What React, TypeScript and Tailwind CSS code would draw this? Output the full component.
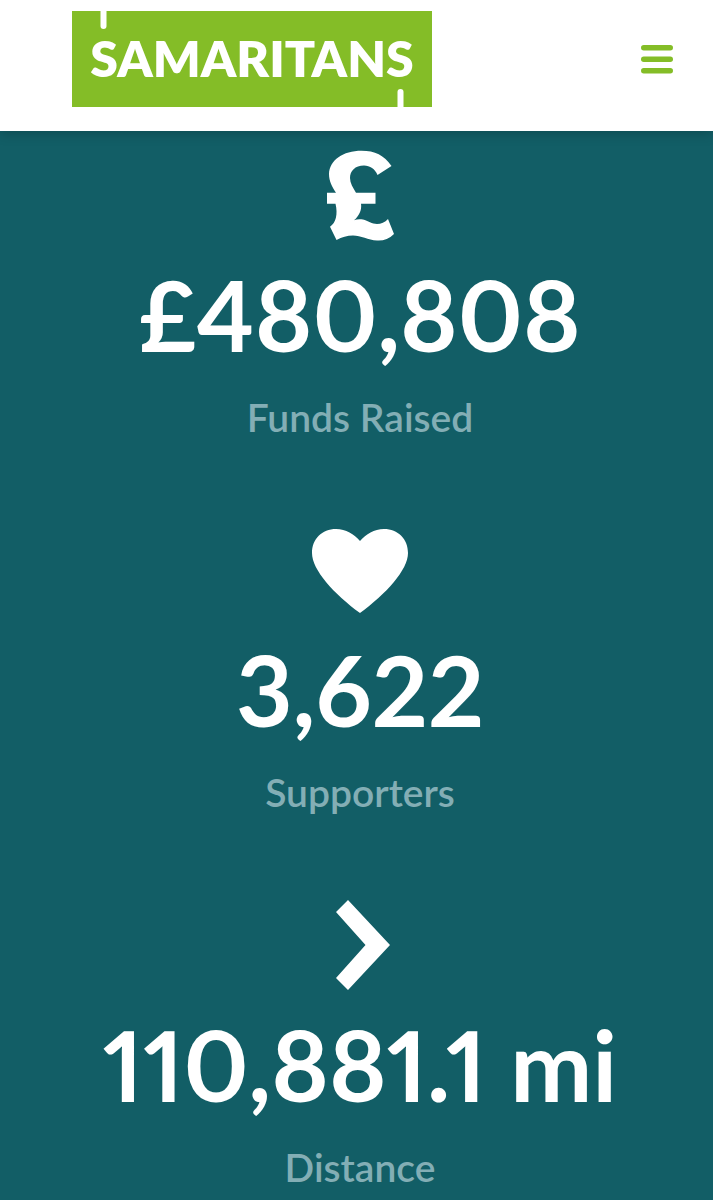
import type { ReactNode } from "react";

function Logo() {
  return (
    <svg viewBox="0 0 360 96" className="block h-24 w-[360px]" role="img" aria-label="Samaritans">
      <rect width="360" height="96" fill="#84bd27" />
      <path d="M31.5 -4V15" stroke="#fff" strokeWidth="6" strokeLinecap="round" />
      <path d="M328.5 81V100" stroke="#fff" strokeWidth="6" strokeLinecap="round" />
      <text x="180" y="66" textAnchor="middle" fill="#fff" fontFamily="Lato, sans-serif" fontWeight="800" fontSize="50">
        SAMARITANS
      </text>
    </svg>
  );
}

function MenuIcon() {
  return (
    <svg viewBox="0 0 32 29" className="block h-[29px] w-8" fill="#84bd27" aria-hidden="true">
      <rect width="32" height="5.5" rx="2.75" />
      <rect y="11.5" width="32" height="5.5" rx="2.75" />
      <rect y="23" width="32" height="5.5" rx="2.75" />
    </svg>
  );
}

function PoundIcon() {
  return (
    <svg viewBox="0 0 96 96" className="size-24" fill="currentColor" aria-hidden="true">
      <path d="M79.500 18 65.500 27C63 21 58 17.500 52 17.500C43 17.500 38 23 38 30C38 35 41 40 44 44.700H63.500V55.700H49C50 62 47 68 42 72.300C45 71 48 71 51 71.500C56 73 60 76 65 76C69 76 73 74.500 76 71L82 86C77 91 71 93 65 92.500C56 92 49 87.500 41 87.500C35 87.500 30 89 24.500 92L18 78.700C24 75 26 66 23.500 55.700H15V44.700H24C20 39 17 33 17 26C17.500 12 31 2.700 49.500 2.700C63 2.700 72 7 79.500 18Z" />
    </svg>
  );
}

function HeartIcon() {
  return (
    <svg viewBox="0 0 96 96" className="size-24" fill="currentColor" aria-hidden="true">
      <path d="M48 18C42 11 34 6 24 6C10 6 0 16 0 30C0 47 22 71 48 90C74 71 96 47 96 30C96 16 86 6 72 6C62 6 54 11 48 18Z" />
    </svg>
  );
}

function ChevronIcon() {
  return (
    <svg viewBox="0 0 96 96" className="size-24" fill="currentColor" aria-hidden="true">
      <path d="M36 2 78 47 36 92 24 80 53.500 47 24 14Z" />
    </svg>
  );
}

function Stat({ icon, value, label }: { icon: ReactNode; value: string; label: string }) {
  return (
    <div className="flex flex-col items-center text-center">
      {icon}
      <p className="mt-2.5 text-[98px] leading-[120px] font-bold whitespace-nowrap proportional-nums">{value}</p>
      <p className="mt-[19px] text-[39px] leading-[48px] font-semibold text-[#83aeb5]">{label}</p>
    </div>
  );
}

export default function App() {
  return (
    <div className="flex min-h-screen flex-col overflow-x-hidden bg-[#125e66] font-['Lato',sans-serif] text-white">
      <header className="z-10 flex items-start justify-between bg-white pt-[11px] pr-10 pb-6 pl-[72px] shadow-[0_2px_12px_rgba(0,0,0,0.22)]">
        <a href="#">
          <Logo />
        </a>
        <button type="button" aria-label="Menu" className="mt-[34px] cursor-pointer">
          <MenuIcon />
        </button>
      </header>
      <main className="flex flex-col gap-[82px] pt-[17px] pl-[7px]">
        <Stat icon={<PoundIcon />} value="£480,808" label="Funds Raised" />
        <Stat icon={<HeartIcon />} value="3,622" label="Supporters" />
        <Stat icon={<ChevronIcon />} value="110,881.1 mi" label="Distance" />
      </main>
    </div>
  );
}
